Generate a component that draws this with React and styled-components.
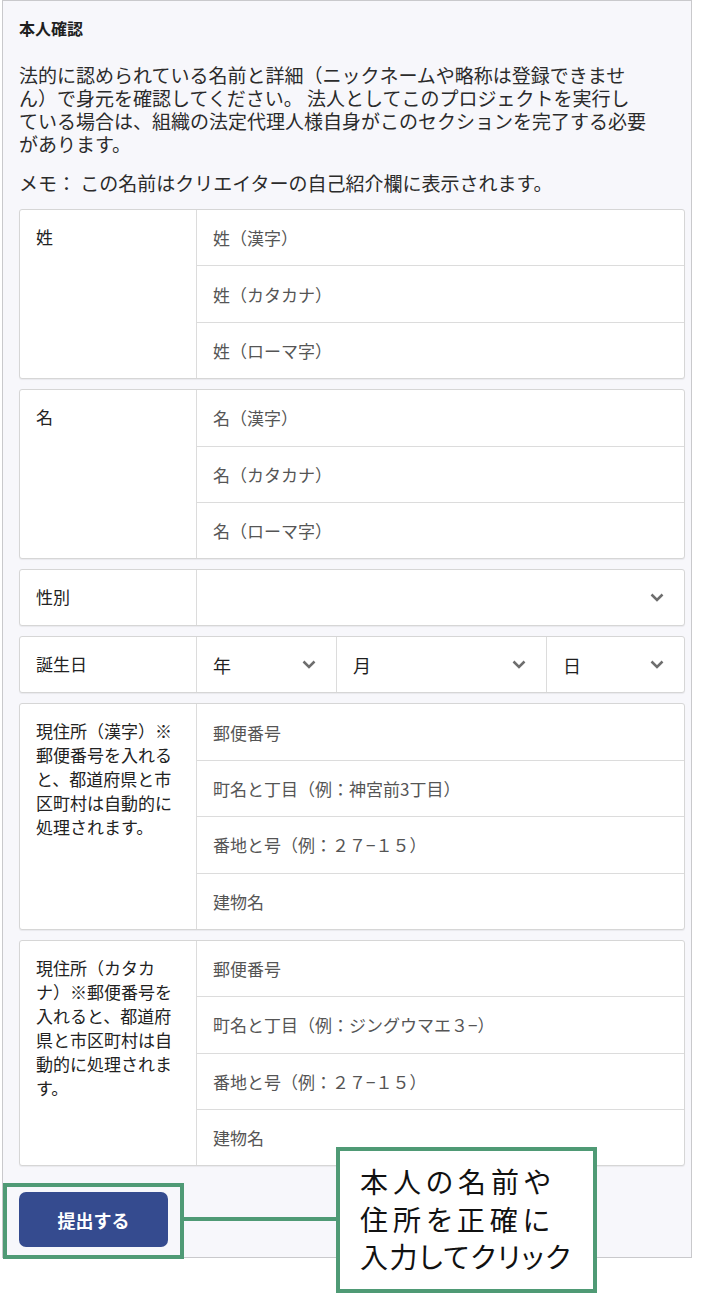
import styled, { createGlobalStyle } from 'styled-components';

const GlobalStyle = createGlobalStyle`
    body {
        margin: 0;
        background: #ffffff;
        font-family: "Noto Sans CJK JP", "Noto Sans", sans-serif;
        color: #2a2a2a;
    }
`;

const Page = styled.div`
    position: relative;
    width: 706px;
    height: 1295px;
`;

const Panel = styled.div`
    margin-left: 2px;
    width: 690px;
    box-sizing: border-box;
    border: 1px solid #c9c9cc;
    background: #f7f7fb;
    padding: 15px 6px 10px 16px;
`;

const Title = styled.h2`
    margin: 0;
    font-size: 16px;
    font-weight: 700;
    line-height: 24px;
    color: #1f1f1f;
`;

const Lead = styled.p`
    margin: 23px 0 0;
    font-size: 19px;
    line-height: 23px;
    white-space: nowrap;
    color: #2b2b2b;
`;

const Memo = styled(Lead)`
    margin-top: 16px;
`;

const Cards = styled.div`
    margin-top: 15px;
    display: flex;
    flex-direction: column;
    gap: 10px;
`;

const Card = styled.div`
    display: grid;
    grid-template-columns: 177px 1fr;
    background: #fff;
    border: 1px solid #d6d6d6;
    border-radius: 3px;
    box-shadow: 0 1px 1px rgba(0, 0, 0, 0.06);
`;

const Label = styled.div`
    padding: 15px 20px 10px 16px;
    font-size: 17px;
    line-height: 24px;
    color: #222;
    border-right: 1px solid #dcdcdc;
`;

const Fields = styled.div`
    display: flex;
    flex-direction: column;
`;

const Field = styled.div`
    height: 55.4px;
    display: flex;
    align-items: center;
    padding-left: 16px;
    font-size: 17px;
    color: #555;
    & + & {
        border-top: 1px solid #dcdcdc;
    }
`;

const SelectRow = styled.div`
    display: grid;
    grid-template-columns: ${(p) => p.cols || '1fr'};
    height: 55px;
`;

const Select = styled.div`
    display: flex;
    align-items: center;
    justify-content: space-between;
    padding: 0 20px 0 16px;
    font-size: 18px;
    color: #1f1f1f;
    & + & {
        border-left: 1px solid #dcdcdc;
    }
`;

const Chevron = () => (
    <svg width="14" height="9" viewBox="0 0 14 9">
        <polyline points="1.5,1.5 7,7 12.5,1.5" fill="none" stroke="#6e6e6e" strokeWidth="2.5" />
    </svg>
);

const SubmitButton = styled.button`
    margin-top: 26px;
    width: 149px;
    height: 55px;
    border: none;
    border-radius: 7px;
    background: #354b8f;
    color: #fff;
    font-family: "Noto Sans CJK JP", sans-serif;
    font-size: 18px;
    font-weight: 700;
    display: block;
`;

const green = '#4f9a75';

const Highlight = styled.div`
    position: absolute;
    left: 3px;
    top: 1183px;
    width: 181px;
    height: 76px;
    box-sizing: border-box;
    border: 4px solid ${green};
`;

const Connector = styled.div`
    position: absolute;
    left: 184px;
    top: 1217px;
    width: 153px;
    height: 4px;
    background: ${green};
`;

const Callout = styled.div`
    position: absolute;
    left: 336px;
    top: 1147px;
    width: 261px;
    height: 146px;
    box-sizing: border-box;
    border: 4px solid ${green};
    background: #fff;
    padding: 12px 0 0 20px;
    display: flex;
    flex-direction: column;
    font-size: 28px;
    line-height: 37.5px;
    font-feature-settings: "palt";
    color: #111;
    white-space: nowrap;
`;

const CalloutLine = styled.span`
    letter-spacing: ${(p) => p.spacing || 5}px;
`;

const NameCard = ({ label }) => (
    <Card>
        <Label>{label}</Label>
        <Fields>
            <Field>{label}（漢字）</Field>
            <Field>{label}（カタカナ）</Field>
            <Field>{label}（ローマ字）</Field>
        </Fields>
    </Card>
);

const AddressCard = ({ label, town }) => (
    <Card>
        <Label>{label}</Label>
        <Fields>
            <Field>郵便番号</Field>
            <Field>町名と丁目（例：{town}）</Field>
            <Field>番地と号（例：２７−１５）</Field>
            <Field>建物名</Field>
        </Fields>
    </Card>
);

export default function App() {
    return (
        <Page>
            <GlobalStyle />
            <Panel>
                <Title>本人確認</Title>
                <Lead>
                    法的に認められている名前と詳細（ニックネームや略称は登録できませ<br />
                    ん）で身元を確認してください。 法人としてこのプロジェクトを実行し<br />
                    ている場合は、組織の法定代理人様自身がこのセクションを完了する必要<br />
                    があります。
                </Lead>
                <Memo>メモ： この名前はクリエイターの自己紹介欄に表示されます。</Memo>
                <Cards>
                    <NameCard label="姓" />
                    <NameCard label="名" />
                    <Card>
                        <Label>性別</Label>
                        <SelectRow>
                            <Select>
                                <span />
                                <Chevron />
                            </Select>
                        </SelectRow>
                    </Card>
                    <Card>
                        <Label>誕生日</Label>
                        <SelectRow cols="139px 210px 1fr">
                            <Select>年<Chevron /></Select>
                            <Select>月<Chevron /></Select>
                            <Select>日<Chevron /></Select>
                        </SelectRow>
                    </Card>
                    <AddressCard
                        label="現住所（漢字）※郵便番号を入れると、都道府県と市区町村は自動的に処理されます。"
                        town="神宮前3丁目"
                    />
                    <AddressCard
                        label="現住所（カタカナ）※郵便番号を入れると、都道府県と市区町村は自動的に処理されます。"
                        town="ジングウマエ３−"
                    />
                </Cards>
                <SubmitButton>提出する</SubmitButton>
            </Panel>
            <Highlight />
            <Connector />
            <Callout>
                <CalloutLine>本人の名前や</CalloutLine>
                <CalloutLine>住所を正確に</CalloutLine>
                <CalloutLine spacing={1.5}>入力してクリック</CalloutLine>
            </Callout>
        </Page>
    );
}
